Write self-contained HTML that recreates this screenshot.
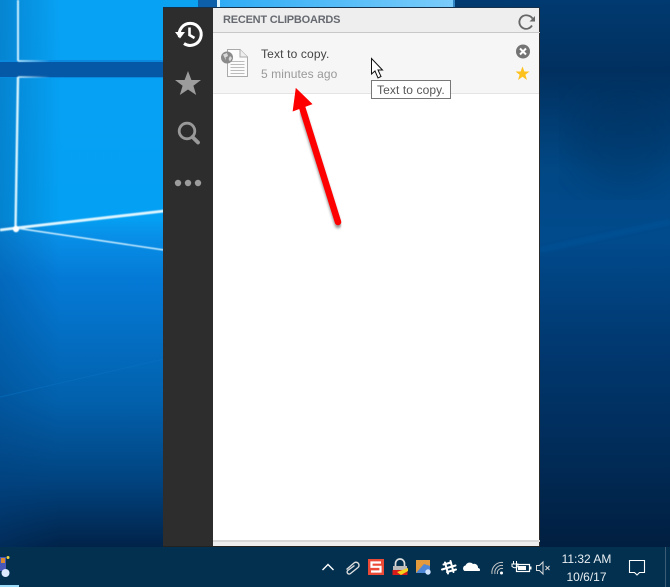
<!DOCTYPE html>
<html><head><meta charset="utf-8"><style>
html,body{margin:0;padding:0}
body{width:670px;height:587px;overflow:hidden;position:relative;background:#013a72;font-family:"Liberation Sans",sans-serif}
.a{position:absolute}
svg{position:absolute;left:0;top:0}
.t{position:absolute;white-space:nowrap}
</style></head><body>
<svg width="670" height="587" viewBox="0 0 670 587">
<defs>
<linearGradient id="l" x1="0" y1="0" x2="0" y2="1">
<stop offset="0" stop-color="#08a2f4"/><stop offset=".4" stop-color="#04a0f3"/><stop offset=".43" stop-color="#0890e8"/><stop offset=".51" stop-color="#047ad6"/><stop offset=".73" stop-color="#0261ad"/><stop offset=".88" stop-color="#01437f"/><stop offset="1" stop-color="#012349"/>
</linearGradient>
<linearGradient id="r" x1="0" y1="0" x2="0" y2="1">
<stop offset="0" stop-color="#013a70"/><stop offset=".13" stop-color="#01305f"/><stop offset=".31" stop-color="#014885"/><stop offset=".44" stop-color="#014a8c"/><stop offset=".64" stop-color="#01386f"/><stop offset=".82" stop-color="#012c59"/><stop offset="1" stop-color="#011f40"/>
</linearGradient>
<linearGradient id="s" x1="0" y1="0" x2="1" y2="0"><stop offset="0" stop-color="#29a9f5"/><stop offset="1" stop-color="#7accfa"/></linearGradient>
<linearGradient id="ld" x1="0" y1="0" x2="1" y2="0"><stop offset="0" stop-color="#01407f" stop-opacity=".3"/><stop offset="1" stop-color="#01407f" stop-opacity="0"/></linearGradient>
<linearGradient id="f1" gradientUnits="userSpaceOnUse" x1="18" y1="0" x2="50" y2="0"><stop offset="0" stop-color="#d8f4ff"/><stop offset="1" stop-color="#d8f4ff" stop-opacity="0"/></linearGradient>
<filter id="b"><feGaussianBlur stdDeviation=".45"/></filter>
<filter id="b2"><feGaussianBlur stdDeviation="1.4"/></filter>
<filter id="b3"><feGaussianBlur stdDeviation="18"/></filter>
</defs>
<rect width="670" height="547" fill="url(#r)"/>
<ellipse cx="625" cy="140" rx="55" ry="50" fill="#012c55" opacity=".3" filter="url(#b3)"/>
<rect width="164" height="547" fill="url(#l)"/>
<rect width="60" height="547" fill="url(#ld)"/>
<rect x="0" y="62" width="164" height="15" fill="#0558a5"/>
<rect x="0" y="60" width="164" height="2" fill="#0a88dd"/>
<rect x="0" y="77" width="164" height="1" fill="#0a88dd"/>
<g filter="url(#b)">
<path d="M18 0V61" stroke="#c8eeff" stroke-width="2" fill="none"/>
<path d="M18 61H50" stroke="url(#f1)" stroke-width="1.600" fill="none"/>
<path d="M18 77H50" stroke="url(#f1)" stroke-width="1.600" fill="none"/>
<path d="M18 77L15.500 229" stroke="#d8f4ff" stroke-width="2.400" fill="none"/>
<path d="M0 230L16 228L164 211" stroke="#dff6ff" stroke-width="2.800" fill="none"/>
<path d="M16 228L164 250" stroke="#cdeeff" stroke-width="1.400" fill="none"/>
<circle cx="16" cy="229" r="3.200" fill="#fff"/>
</g>
<path d="M0 397L164 359" stroke="#0a6fc0" stroke-width="1" fill="none" opacity=".6"/>
<path d="M540 250L670 222" stroke="#015499" stroke-width="6" opacity=".5" fill="none" filter="url(#b2)"/>
<rect x="200" y="0" width="255" height="8" fill="url(#s)"/>
<rect x="198" y="0" width="19" height="8" fill="#0c5fa8"/>
<rect x="217" y="0" width="3" height="8" fill="#d8f2ff"/>
<rect x="453" y="0" width="2" height="8" fill="#2f85c4"/>
<rect x="163" y="0" width="35" height="8" fill="#0ca2f2"/>
<rect y="547" width="670" height="40" fill="#03304f"/>
</svg>

<div class="a" style="left:163px;top:7px;width:377px;height:1px;background:#14304a"></div>
<div class="a" style="left:163px;top:8px;width:50px;height:539px;background:#2d2d2d"></div>
<div class="a" style="left:213px;top:8px;width:326px;height:539px;background:#fff"></div>
<div class="a" style="left:539px;top:8px;width:1px;height:539px;background:#2b2b2b"></div>
<div class="a" style="left:213px;top:8px;width:326px;height:24px;background:#eee"></div>
<div class="a" style="left:213px;top:32px;width:327px;height:1px;background:#c8c8c8"></div>
<div class="a" style="left:213px;top:33px;width:326px;height:60px;background:#f6f6f6"></div>
<div class="a" style="left:213px;top:93px;width:326px;height:1px;background:#e4e4e4"></div>
<div class="a" style="left:213px;top:540px;width:327px;height:2px;background:#d8d8d8"></div>
<div class="a" style="left:213px;top:542px;width:326px;height:4px;background:#eee"></div>
<div class="a" style="left:163px;top:546px;width:377px;height:1px;background:#222"></div>

<div class="t" style="left:223px;top:14px;font-size:11px;font-weight:bold;color:#666a70;line-height:13px;letter-spacing:-.22px">RECENT CLIPBOARDS</div>
<div class="t" style="left:261px;top:47px;font-size:12px;color:#444;line-height:14px;letter-spacing:.15px">Text to copy.</div>
<div class="t" style="left:261px;top:67px;font-size:12px;color:#999;line-height:14px;letter-spacing:.08px">5 minutes ago</div>

<svg width="670" height="587" viewBox="0 0 670 587">
<path d="M179.500 37A11 11 0 1 1 184 43.500" fill="none" stroke="#fff" stroke-width="3"/>
<path d="M175 32H185L180 38.500Z" fill="#fff"/>
<path d="M189.500 27.500V35L194.500 38" fill="none" stroke="#fff" stroke-width="2.600"/>
<path d="M188 71L191.400 80H201L193.400 85.700L196.200 95L188 89.500L179.800 95L182.600 85.700L175 80H184.600Z" fill="#9c9c9c"/>
<circle cx="187" cy="131" r="7.800" fill="none" stroke="#999" stroke-width="2.800"/>
<path d="M192.500 137L198 142.500" stroke="#999" stroke-width="3.800" stroke-linecap="round"/>
<circle cx="178" cy="183" r="3.200" fill="#9c9c9c"/><circle cx="188" cy="183" r="3.200" fill="#9c9c9c"/><circle cx="198" cy="183" r="3.200" fill="#9c9c9c"/>
<path d="M532 25.500A6.800 6.800 0 1 1 528 15.500A7 7 0 0 1 532.500 18.500" fill="none" stroke="#666" stroke-width="1.800"/>
<path d="M529.500 21.500H535V16Z" fill="#666"/>
<path d="M227.500 49.500H240L247.500 57V76.500H227.500Z" fill="#fbfbfb" stroke="#aaa" stroke-width="1"/>
<path d="M240 49.500V57H247.500" fill="#eee" stroke="#aaa" stroke-width="1"/>
<path d="M230.500 61.500H244.500M230.500 64.500H244.500M230.500 67.500H244.500M230.500 70.500H244.500M230.500 73.500H244.500" stroke="#bbb" stroke-width="1"/>
<circle cx="227" cy="57.500" r="6" fill="#8a8a8a"/>
<path d="M223 54.500L227 53L228 56L225.500 57.500L226 60.500ZM230 56L232 58L230 61.500L228.500 59Z" fill="#d9d9d9"/>
<circle cx="523" cy="51.500" r="7" fill="#747474"/>
<path d="M520 48.500L526 54.500M526 48.500L520 54.500" stroke="#fff" stroke-width="2"/>
<path d="M522.500 66.500L524.400 71.500H529.500L525.400 74.700L527 80L522.500 76.800L518 80L519.600 74.700L515.500 71.500H520.600Z" fill="#fdc11e"/>
<g opacity=".5" filter="url(#b2)"><path d="M338 225L303 113" stroke="#333" stroke-width="6.500" stroke-linecap="round"/></g>
<path d="M338 222L302 107" stroke="#f00" stroke-width="6.500" stroke-linecap="round"/>
<path d="M296 88.500L312 104L293 111Z" fill="#f00" stroke="#f00" stroke-width=".6"/>
<path d="M371.500 58.500V74L375 71L378 78L381 76.500L378 70H382.500Z" fill="#fff" stroke="#111" stroke-width="1"/>
<path d="M322.500 570L328 564.500L333.500 570" fill="none" stroke="#fff" stroke-width="1.400"/>
<path d="M346.500 569.500L354 563A3 3 0 0 1 358 567.500L350.500 573.500A2 2 0 0 1 347.800 570.500L354.500 565.500" fill="none" stroke="#ddd" stroke-width="1.400"/>
<rect x="368" y="559" width="16" height="16" fill="#ea4a36"/>
<path d="M381 562.500H371.500V566.800H380.500V571.500H371" fill="none" stroke="#fff" stroke-width="2.200"/>
<path d="M395.500 566V563.500A4.500 4.500 0 0 1 404.500 563.500V566" fill="none" stroke="#ddd" stroke-width="1.700"/>
<rect x="393" y="566" width="14" height="4" fill="#bbb"/>
<rect x="392.500" y="570" width="15" height="5" fill="#d81c1c"/>
<path d="M397 572L408 568V571L401 575Z" fill="#f5d21c"/>
<rect x="416" y="560" width="14" height="13" fill="#e39a3c"/>
<path d="M416 573L424 564L430 566V573Z" fill="#4d87d6"/>
<circle cx="428" cy="572" r="2.700" fill="#cfe3ff"/>
<path d="M445 562.500L448 573.500M450.500 561L453.500 572M442 569.500L455.500 565.500M443.500 564.500L451 562.500M447 572L456 569.500" stroke="#fff" stroke-width="2" stroke-linecap="round"/>
<path d="M464.500 571A3 3 0 0 1 465.500 565.500A4.500 4.500 0 0 1 473 564A3.800 3.800 0 0 1 478 568A2 2 0 0 1 480 570.500Q480 571 479 571Z" fill="#fff"/>
<path d="M492 574A10 10 0 0 1 503 562.500M495 574A7 7 0 0 1 503 565.500M497.500 574A4.500 4.500 0 0 1 503 568.500" fill="none" stroke="#c8c8c8" stroke-width="1"/>
<circle cx="501.500" cy="573" r="1.500" fill="#fff"/>
<rect x="516.500" y="564.500" width="13" height="7" fill="none" stroke="#fff" stroke-width="1.200"/>
<rect x="518" y="566" width="8" height="4" fill="#fff"/>
<rect x="530" y="566.500" width="1.500" height="3" fill="#fff"/>
<path d="M513.500 561V564M516.500 561V564M512 564H518V566.500Q515 569 512 566.500Z" fill="none" stroke="#fff" stroke-width="1"/>
<path d="M536.500 565.500H539.500L543 562V574L539.500 570.500H536.500Z" fill="none" stroke="#ddd" stroke-width="1"/>
<path d="M545.500 566L549.500 570M549.500 566L545.500 570" stroke="#ddd" stroke-width="1"/>
<path d="M629.500 560.500H644.500V572.500H639.500L637 575L634.500 572.500H629.500Z" fill="none" stroke="#fff" stroke-width="1.100"/>
<rect x="665" y="547" width="1" height="40" fill="#3c5c75"/>
<rect x="0" y="557" width="6" height="14" fill="#4758b8"/>
<rect x="1" y="558" width="4" height="5" fill="#d98a30"/>
<circle cx="8" cy="557.500" r="1.500" fill="#f2d53c"/>
<circle cx="5.500" cy="573" r="4" fill="#dce9ff"/>
<rect x="0" y="585" width="19" height="2" fill="#9cdcfb"/>
</svg>

<div class="t" style="left:371px;top:80px;width:80px;height:19px;box-sizing:border-box;border:1px solid #777;background:#fff;font-size:12px;color:#575757;line-height:18px;padding-left:5px;letter-spacing:.1px">Text to copy.</div>
<div class="t" style="left:560px;top:552px;width:53px;text-align:center;font-size:12px;color:#e8eef2;line-height:14px">11:32 AM</div>
<div class="t" style="left:560px;top:570px;width:53px;text-align:center;font-size:12px;color:#e8eef2;line-height:14px">10/6/17</div>
</body></html>
